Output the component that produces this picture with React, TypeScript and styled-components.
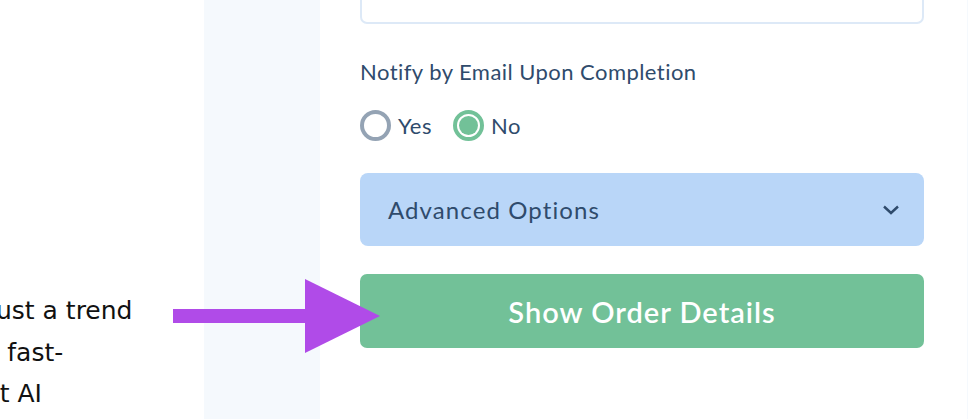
import styled, { createGlobalStyle } from "styled-components";

const GlobalStyle = createGlobalStyle`
  html, body {
    margin: 0;
    padding: 0;
    background: #ffffff;
    overflow: hidden;
  }
`;

const Page = styled.div`
  position: relative;
  display: flex;
  width: 968px;
  height: 419px;
  overflow: hidden;
`;

const BlurbColumn = styled.div`
  width: 204px;
  flex-shrink: 0;
  overflow: hidden;
  padding-top: 290px;
`;

const Blurb = styled.div`
  font-family: "DejaVu Sans", sans-serif;
  font-size: 25px;
  line-height: 41.5px;
  color: #111111;
  white-space: nowrap;
`;

const BlurbLine = styled.div<{ $shift: number }>`
  margin-left: ${(p) => p.$shift}px;
`;

const Strip = styled.div<{ $width: number }>`
  width: ${(p) => p.$width}px;
  flex-shrink: 0;
  background: #f5f9fd;
`;

const Panel = styled.div`
  flex: 1;
  display: flex;
  flex-direction: column;
  padding: 0 43px 0 40px;
  font-family: Lato, sans-serif;
  color: #2f4b6c;
`;

const InputBox = styled.div`
  height: 52px;
  margin-top: -32px;
  border: 2px solid #dde9f7;
  border-radius: 7px;
`;

const Label = styled.div`
  margin-top: 35px;
  font-size: 22px;
  line-height: 26px;
  letter-spacing: 0.45px;
`;

const RadioRow = styled.div`
  display: flex;
  align-items: center;
  gap: 21px;
  margin-top: 25px;
`;

const RadioOption = styled.label`
  display: flex;
  align-items: center;
  gap: 7px;
  font-size: 22px;
  letter-spacing: 0.5px;
`;

const RadioCircle = styled.span<{ $checked?: boolean }>`
  box-sizing: border-box;
  width: 31px;
  height: 31px;
  border-radius: 50%;
  border: 4px solid ${(p) => (p.$checked ? "#72c198" : "#94a3b4")};
  display: flex;
  align-items: center;
  justify-content: center;
  &::after {
    content: "";
    display: ${(p) => (p.$checked ? "block" : "none")};
    width: 19px;
    height: 19px;
    border-radius: 50%;
    background: #72c198;
  }
`;

const Accordion = styled.div`
  margin-top: 32px;
  height: 73px;
  display: flex;
  align-items: center;
  justify-content: space-between;
  padding: 0 24px 0 28px;
  background: #b9d6f8;
  border-radius: 8px;
  font-size: 24px;
  letter-spacing: 1.1px;
`;

const SubmitButton = styled.button`
  margin-top: 28px;
  height: 74px;
  border: none;
  border-radius: 7px;
  background: #72c198;
  color: #ffffff;
  font-family: Lato, sans-serif;
  font-size: 29px;
  font-weight: 600;
  letter-spacing: 1px;
`;

const ArrowOverlay = styled.svg`
  position: absolute;
  left: 173px;
  top: 279px;
`;

function Chevron() {
  return (
    <svg width="18" height="12" viewBox="0 0 18 12">
      <path
        d="M2 2.5 L9 9 L16 2.5"
        fill="none"
        stroke="#2f4b6c"
        strokeWidth="2.4"
      />
    </svg>
  );
}

export default function App() {
  return (
    <>
      <GlobalStyle />
      <Page>
        <BlurbColumn>
          <Blurb>
            <BlurbLine $shift={-11}>just a trend</BlurbLine>
            <BlurbLine $shift={-16}>a fast-</BlurbLine>
            <BlurbLine $shift={-32}>but AI</BlurbLine>
          </Blurb>
        </BlurbColumn>
        <Strip $width={116} />
        <Panel>
          <InputBox />
          <Label>Notify by Email Upon Completion</Label>
          <RadioRow>
            <RadioOption>
              <RadioCircle />
              Yes
            </RadioOption>
            <RadioOption>
              <RadioCircle $checked />
              No
            </RadioOption>
          </RadioRow>
          <Accordion>
            Advanced Options
            <Chevron />
          </Accordion>
          <SubmitButton>Show Order Details</SubmitButton>
        </Panel>
        <Strip $width={1} />
        <ArrowOverlay width="207" height="74" viewBox="0 0 207 74">
          <rect x="0" y="30" width="133" height="14" fill="#b04be8" />
          <polygon points="132,0 207,37 132,74" fill="#b04be8" />
        </ArrowOverlay>
      </Page>
    </>
  );
}
